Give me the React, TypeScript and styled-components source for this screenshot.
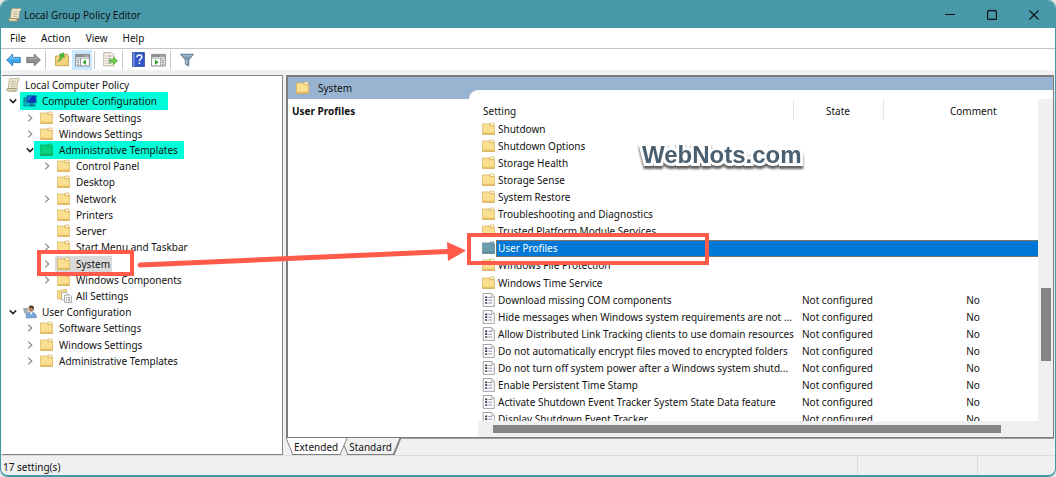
import React from "react";
import styled, { createGlobalStyle, css } from "styled-components";

const Global = createGlobalStyle`
  * { box-sizing: border-box; }
  html, body, #root { height: 100%; }
  body {
    margin: 0;
    background: #e4e6e8;
    color: #111;
    font: 10px/16px "Noto Sans", "Open Sans", sans-serif;
  }
  button { font: inherit; color: inherit; border: 0; padding: 0; background: none; }
  svg { display: block; flex: none; }
`;

const teal = "#4799aa";
const face = "#f0f0f0";
const red = "#ff5a4a";
const focus = "#7d7468";

const Window = styled.div`
  position: relative;
  display: flex;
  flex-direction: column;
  height: 100vh;
  min-height: 400px;
  overflow: hidden;
  background: ${face};
  border: 1px solid ${teal};
  border-bottom-width: 2px;
  border-radius: 8px;
`;
const TitleBar = styled.header`
  display: flex;
  align-items: center;
  height: 27px;
  flex: none;
  padding-left: 7px;
  background: ${teal};
`;
const Title = styled.h1`
  flex: 1;
  margin: 0;
  padding-left: 2px;
  font-size: 10px;
  font-weight: 400;
`;
const CaptionButton = styled.button`
  display: grid;
  place-items: center;
  width: 42px;
  height: 27px;
`;
const MenuBar = styled.nav`
  display: flex;
  gap: 15px;
  height: 21px;
  flex: none;
  align-items: center;
  padding-left: 9px;
  background: #fff;
  border-bottom: 1px solid #c3c5c9;
`;
const ToolBar = styled.div`
  display: flex;
  align-items: center;
  height: 21px;
  flex: none;
  padding-left: 2px;
  background: #fff;
`;
const ToolButton = styled.button<{ $on?: boolean }>`
  display: grid;
  place-items: center;
  width: 20px;
  height: 20px;
  ${(p) => p.$on && css`background: #cce8ff;`}
`;
const Divider = styled.span<{ $after?: number }>`
  width: 1px;
  height: 18px;
  margin: 0 ${(p) => p.$after ?? 5}px 0 2px;
  background: #c8c8c8;
`;
const Main = styled.main`
  display: flex;
  flex: 1;
  min-height: 0;
  gap: 3px;
  padding: 5px 1px 0 1px;
`;
const TreePane = styled.section`
  width: 281px;
  flex: none;
  overflow: hidden;
  background: #fff;
  border: 1px solid #828790;
  border-left: 0;
  padding-top: 1px;
`;
const Tree = styled.ul`
  display: grid;
  grid-auto-rows: 1fr;
  height: 292px;
  margin: 0;
  padding: 0;
  list-style: none;
`;
const TreeItem = styled.li<{ $depth: number }>`
  display: flex;
  align-items: center;
  padding-left: ${(p) => p.$depth * 17}px;
`;
const Toggle = styled.span`
  display: grid;
  place-items: center;
  width: 18px;
  margin-left: 2px;
`;
const TreeLabel = styled.span<{ $mark?: [number, number]; $selected?: boolean; $root?: boolean }>`
  display: flex;
  align-items: center;
  gap: 5px;
  height: 16px;
  padding: 0 2px 0 1px;
  white-space: nowrap;
  ${(p) => p.$root && css`margin-left: -17px;`}
  ${(p) =>
    p.$mark &&
    css`
      height: 18px;
      margin: -1px 0 -1px ${1 - p.$mark[0]}px;
      padding: 0 ${p.$mark[1]}px 0 ${p.$mark[0]}px;
      background: #00ffd9;
    `}
  ${(p) => p.$selected && css`margin-left: -1px; padding-left: 2px; background: #d9d9d9;`}
`;
const IconBox = styled.span`
  width: 14px;
`;
const RightColumn = styled.div`
  display: flex;
  flex-direction: column;
  flex: 1;
  min-width: 0;
`;
const ResultPane = styled.section`
  display: grid;
  grid-template-columns: 181px 1fr;
  grid-template-rows: 13px 9px 1fr;
  flex: 1;
  min-height: 0;
  background: #fff;
  border: 2px solid #7c7c7c;
  border-right-width: 1px;
  border-bottom-width: 1px;
`;
const PaneHeader = styled.div`
  grid-area: 1 / 1 / 3 / 3;
  display: flex;
  align-items: center;
  gap: 9px;
  padding-left: 8px;
  background: #99b4d1;
`;
const Description = styled.div`
  grid-area: 3 / 1;
  padding: 4px;
  font-weight: 700;
`;
const ListArea = styled.div`
  grid-area: 2 / 2 / 4 / 3;
  display: grid;
  grid-template-columns: minmax(0, 1fr) 15px;
  grid-template-rows: minmax(0, 1fr) 16px;
  min-height: 0;
  padding: 9px 0 0 9px;
  background: #fff;
  border-top-left-radius: 9px;
`;
const ListView = styled.div`
  overflow: hidden;
`;
const VerticalBar = styled.div`
  display: flex;
  flex-direction: column;
  padding: 0 2px 0 3px;
  background: ${face};
  &::before { content: ""; flex: 189; }
  &::after { content: ""; flex: 60; }
`;
const HorizontalBar = styled.div`
  grid-column: 1 / 3;
  display: flex;
  padding: 4px 0;
  background: ${face};
  &::before { content: ""; flex: 15; }
  &::after { content: ""; flex: 52; }
`;
const Thumb = styled.span<{ $share: number }>`
  flex: ${(p) => p.$share};
  background: #858585;
`;
const Table = styled.table`
  width: calc(100% + 25px);
  height: 329px;
  table-layout: fixed;
  border-collapse: collapse;
`;
const HeadCell = styled.th<{ $left?: boolean }>`
  height: 21px;
  padding: 2px 5px 0;
  font-weight: 400;
  text-align: ${(p) => (p.$left ? "left" : "center")};
  border-right: 1px solid #e5e5e5;
  &:last-child { border-right: 0; }
`;
const Row = styled.tr`
  height: 17px;
`;
const Cell = styled.td<{ $center?: boolean; $selected?: boolean }>`
  padding: 0 0 0 ${(p) => (p.$center ? 0 : 9)}px;
  line-height: 16px;
  white-space: nowrap;
  text-align: ${(p) => (p.$center ? "center" : "left")};
  ${(p) =>
    p.$selected &&
    css`background: #0078d7; box-shadow: inset 0 1px ${focus}, inset 0 -1px ${focus};`}
`;
const NameCell = styled(Cell)`
  padding: 0 0 0 4px;
`;
const Name = styled.div`
  display: flex;
  align-items: center;
  gap: 1px;
  height: 17px;
`;
const NameText = styled.span<{ $selected?: boolean }>`
  flex: 1;
  min-width: 0;
  padding: 0 2px;
  ${(p) =>
    p.$selected &&
    css`
      color: #fff;
      background: #0078d7;
      line-height: 17px;
      box-shadow: inset 1px 1px ${focus}, inset 0 -1px ${focus};
    `}
`;
const Tabs = styled.div`
  display: flex;
  height: 17px;
  flex: none;
  border-top: 1px solid #a0a0a0;
`;
const Tab = styled.button<{ $active?: boolean }>`
  position: relative;
  z-index: ${(p) => (p.$active ? 1 : 0)};
  isolation: isolate;
  height: 16px;
  padding: 0 9px 0 8px;
  margin-right: -6px;
  &::before, &::after {
    content: "";
    position: absolute;
    z-index: -1;
    top: -1px;
    bottom: 0;
    background: ${(p) => (p.$active ? "#fff" : face)};
    border: 0 solid #808080;
    border-bottom-width: 1px;
  }
  &::before { left: 3px; right: 40%; border-left-width: 1px; transform: skewX(22deg); }
  &::after { left: 40%; right: 3px; border-right-width: ${(p) => (p.$active ? 1 : 2)}px; transform: skewX(-22deg); }
`;
const StatusBar = styled.footer`
  display: flex;
  height: 20px;
  flex: none;
  padding-left: 2px;
  line-height: 22px;
  border-top: 1px solid #dcdcdc;
`;
const StatusText = styled.span`
  flex: 1;
`;
const StatusCell = styled.span<{ $width: number }>`
  width: ${(p) => p.$width}px;
  border-left: 1px solid #d9d9d9;
`;
const Callout = styled.div<{ $x: number; $y: number; $w: number; $h: number }>`
  position: absolute;
  left: ${(p) => p.$x}px;
  top: ${(p) => p.$y}px;
  width: ${(p) => p.$w}px;
  height: ${(p) => p.$h}px;
  border: 4px solid ${red};
`;
const ArrowLayer = styled.svg`
  position: absolute;
  left: 129px;
  top: 229px;
`;
const Watermark = styled.div`
  position: absolute;
  left: 641px;
  top: 140px;
  font: 700 24px/28px "Liberation Sans", Arial, sans-serif;
  color: #4a6070;
  -webkit-text-stroke: 6px #fff;
  paint-order: stroke fill;
  filter: drop-shadow(0 3px 1px #606060);
`;

const Folder = ({ tone = "plain" }: { tone?: "plain" | "green" | "blue" }) => {
  const c = {
    plain: ["#fadf90", "#f0ca6c", "#d0a850", "#fff"],
    green: ["#05d27c", "#04c070", "#079a5c", "#12df90"],
    blue: ["#6a9eaa", "#5f929e", "#4b7f8d", "#86b4be"],
  }[tone];
  return (
    <svg width="13" height="14" viewBox="0 0 13 14" aria-hidden="true">
      <path d="M7 3L8.2 1H12V12H7z" fill={c[1]} stroke={c[2]} strokeWidth=".6" />
      <path d="M8.8 1.5h2.6v1.6H8.8z" fill={c[3]} />
      <path d="M.5 1.9H6.8L8 3.6H12.6V12.2H.5z" fill={c[0]} stroke={c[2]} strokeWidth=".6" />
      <path d="M.8 10.6H12.4V12H.8z" fill={c[1]} />
      <path d="M.3 12.2H12.8" stroke={c[2]} strokeWidth=".9" />
    </svg>
  );
};

const Scroll = () => (
  <svg width="14" height="14" viewBox="0 0 14 14" aria-hidden="true">
    <path d="M3.5 1.2C4 .6 5 .6 5.5.6H12.5C13.6.8 13.6 2.6 12.3 2.8H11.6L10.8 10.5H2.2z" fill="#f3ecd2" stroke="#a39878" strokeWidth=".7" />
    <path d="M1.2 10.5H9.2C8.6 11.5 9 13 10 13.3H2C.4 13 .4 11 1.2 10.5z" fill="#e2d7b0" stroke="#8e8466" strokeWidth=".7" />
    <path d="M10 13.3C11.4 13 11.2 11.2 10.8 10.4" fill="none" stroke="#8e8466" strokeWidth=".8" />
    <path d="M5 3.2h5M4.8 5h5M4.6 6.8h5M4.4 8.6h5" stroke="#b0a88c" strokeWidth=".7" />
  </svg>
);

const Computer = () => (
  <svg width="14" height="14" viewBox="0 0 14 14" aria-hidden="true">
    <path d="M.8 3.5H4V12H.8z" fill="#0bb0c0" stroke="#087a92" strokeWidth=".7" />
    <path d="M4 1.5H13.2V9H4z" fill="#0a35b8" stroke="#0a8fae" strokeWidth=".9" />
    <path d="M4.8 2.2H9L5 7.8z" fill="#1f78e0" />
    <path d="M7 9H10.4V11H7zM5 10.6H12.6V12.4H5z" fill="#08809c" />
    <path d="M1.4 5.2H3.4M1.4 7H3.4" stroke="#066" strokeWidth=".7" />
  </svg>
);

const User = () => (
  <svg width="14" height="14" viewBox="0 0 14 14" aria-hidden="true">
    <path d="M3.2 13C3 8.8 5.2 7 8 7S13.4 9 13.4 12.6z" fill="#7ba9dd" stroke="#4a76ad" strokeWidth=".6" />
    <circle cx="8" cy="4" r="2.7" fill="#b98560" />
    <path d="M5.6 2.8C5.8.8 7.5.2 8.8.6 11 .9 11.2 3.2 10.6 5 9.8 3 7.8 2 5.6 2.8z" fill="#4e3626" />
    <path d="M.6 3.4H4.4V7.2L3 9.4 1.4 7.2z" fill="#a9b6c0" stroke="#71808c" strokeWidth=".6" />
    <path d="M6.8 7.2L8.2 9.8 9.6 7.2z" fill="#fff" />
  </svg>
);

const AllSettings = () => (
  <svg width="15" height="14" viewBox="0 0 15 14" aria-hidden="true">
    <path d="M.4 1.4H4.6L5.8.4H9.4V10H.4z" fill="#f7d983" stroke="#cda74c" strokeWidth=".6" />
    <path d="M4.6 3.4H9.4L10.8 4.8V11H4.6z" fill="#fff" stroke="#909090" strokeWidth=".7" />
    <path d="M7.6 6H12.6L14.4 7.6V13.6H7.6z" fill="#fff" stroke="#858585" strokeWidth=".7" />
    <path d="M9 8.6h1M11 8.6h2M9 10.2h1M11 10.2h2M9 11.8h1M11 11.8h2" stroke="#777" strokeWidth=".8" />
  </svg>
);

const SettingPage = () => (
  <svg width="13" height="14" viewBox="0 0 13 14" aria-hidden="true">
    <path d="M1.2.5H9.6L12.3 3.2V13.4H1.2z" fill="#fff" stroke="#8d8d8d" strokeWidth=".8" />
    <path d="M9.4.8V3.4H12" fill="none" stroke="#a8a8a8" strokeWidth=".7" />
    <path d="M3.2 4.4h2M3.2 7.2h2M3.2 10h2" stroke="#2b2b45" strokeWidth="1.7" />
    <path d="M6.4 4.4h3.8M6.4 7.2h3.8M6.4 10h3.8" stroke="#8c8cae" strokeWidth="1" />
  </svg>
);

const Chevron = ({ open }: { open?: boolean }) => (
  <svg width="8" height="8" viewBox="0 0 8 8" fill="none" aria-hidden="true">
    {open ? (
      <path d="M.8 2.4L4 5.6 7.2 2.4" stroke="#222" strokeWidth="1.5" />
    ) : (
      <path d="M2.2.6L5.8 4 2.2 7.4" stroke="#8a8a8a" strokeWidth="1.2" />
    )}
  </svg>
);

const BlueArrow = () => (
  <svg width="15" height="14" viewBox="0 0 15 14" aria-hidden="true">
    <path d="M.7 7L6.6 1.2V4.4H14.2V9.6H6.6V12.8z" fill="#3ba7ea" stroke="#2173b4" strokeWidth=".9" />
    <path d="M2.6 6.6L6 3.4V5.6H13" fill="none" stroke="#8fd2f8" strokeWidth=".9" />
  </svg>
);
const GreyArrow = () => (
  <svg width="15" height="14" viewBox="0 0 15 14" aria-hidden="true">
    <path d="M14.3 7L8.4 1.2V4.4H.8V9.6H8.4V12.8z" fill="#909090" stroke="#686868" strokeWidth=".9" />
    <path d="M1.8 5.6H9V3.6L12.4 6.8" fill="none" stroke="#b8b8b8" strokeWidth=".8" />
  </svg>
);
const UpFolder = () => (
  <svg width="14" height="15" viewBox="0 0 14 15" aria-hidden="true">
    <path d="M.6 4H6L7.4 2.2H12.4V4H13.4V13.6H.6z" fill="#f3d27b" stroke="#bd9640" strokeWidth=".8" />
    <path d="M2.8 9.4C5.6 8.6 7 7 7.4 4.8L9.4 5.4 8.6.8 4 2.8 5.6 3.8C5.4 6.2 4.4 7.8 2.8 9.4z" fill="#4dba35" stroke="#2c8a1c" strokeWidth=".5" />
  </svg>
);
const Panel = ({ divided }: { divided?: boolean }) => (
  <svg width="15" height="14" viewBox="0 0 15 14" aria-hidden="true">
    <path d="M.6 1.4H14.4V13H.6z" fill="#fff" stroke="#808080" strokeWidth=".9" />
    <path d="M1 1.8H14V4.2H1z" fill="#8a8f96" />
    <path d="M9.8 3h1M11.8 3h1" stroke="#fff" strokeWidth=".9" />
    <path d="M1 5.2H14" stroke="#a0a6ac" strokeWidth=".8" />
    {divided ? (
      <>
        <path d="M5.4 5.2V13" stroke="#808080" strokeWidth=".9" />
        <path d="M1.8 7.2h2.4M1.8 9.2h2.4M1.8 11.2h2.4" stroke="#707a86" strokeWidth="1" />
        <path d="M11 6.4L7.4 9.2 11 12z" fill="#3da02c" />
      </>
    ) : (
      <>
        <path d="M9.8 5.2V13" stroke="#808080" strokeWidth=".9" />
        <path d="M11 7.2h2.2M11 9.2h2.2M11 11.2h2.2" stroke="#707a86" strokeWidth="1" />
        <path d="M4 6.4L7.6 9.2 4 12z" fill="#3da02c" />
      </>
    )}
  </svg>
);
const ExportIcon = () => (
  <svg width="15" height="15" viewBox="0 0 15 15" aria-hidden="true">
    <path d="M.8.8H8.4L10.8 3.2V13.8H.8z" fill="#fdf9ea" stroke="#a39a7d" strokeWidth=".8" />
    <path d="M2.6 4h1M4.6 4h4M2.6 6.4h1M4.6 6.4h3M2.6 8.8h1M4.6 8.8h2M2.6 11.2h1M4.6 11.2h4" stroke="#7b7b8a" strokeWidth=".8" />
    <path d="M6.6 7.4H10.4V5L14.6 8.8 10.4 12.4V10.2H6.6z" fill="#6fd04a" stroke="#3a9624" strokeWidth=".6" />
  </svg>
);
const HelpIcon = () => (
  <svg width="13" height="15" viewBox="0 0 13 15" aria-hidden="true">
    <path d="M.6.6H12.4V14.4H.6z" fill="#3558c8" stroke="#1c3a94" strokeWidth=".8" />
    <path d="M1 .8H2.6V14.2H1z" fill="#7594e4" />
    <path d="M5 5.2C5 2.4 9.8 2.4 9.8 5.2 9.8 7 7.4 7 7.4 9.2" fill="none" stroke="#fff" strokeWidth="1.5" />
    <path d="M6.6 10.4h1.6v1.6H6.6z" fill="#fff" />
  </svg>
);
const Funnel = () => (
  <svg width="14" height="14" viewBox="0 0 14 14" aria-hidden="true">
    <path d="M.4 1.2H13.6L8.8 7V13L5.4 11.4V7z" fill="#7c98ad" stroke="#56748a" strokeWidth=".8" />
    <path d="M2.4 2.2H11.6L10.4 3.6H3.6z" fill="#a9becd" />
    <path d="M6.6 7V11.4" stroke="#c3d3de" strokeWidth="1" />
  </svg>
);

type Node = {
  label: string;
  depth: number;
  state?: "open" | "closed";
  icon?: React.ReactNode;
  mark?: [number, number];
  selected?: boolean;
};
const nodes: Node[] = [
  { label: "Local Computer Policy", depth: 0, icon: <Scroll /> },
  { label: "Computer Configuration", depth: 0, state: "open", icon: <Computer />, mark: [3, 11] },
  { label: "Software Settings", depth: 1, state: "closed" },
  { label: "Windows Settings", depth: 1, state: "closed" },
  { label: "Administrative Templates", depth: 1, state: "open", icon: <Folder tone="green" />, mark: [6, 6] },
  { label: "Control Panel", depth: 2, state: "closed" },
  { label: "Desktop", depth: 2 },
  { label: "Network", depth: 2, state: "closed" },
  { label: "Printers", depth: 2 },
  { label: "Server", depth: 2 },
  { label: "Start Menu and Taskbar", depth: 2, state: "closed" },
  { label: "System", depth: 2, state: "closed", selected: true },
  { label: "Windows Components", depth: 2, state: "closed" },
  { label: "All Settings", depth: 2, icon: <AllSettings /> },
  { label: "User Configuration", depth: 0, state: "open", icon: <User /> },
  { label: "Software Settings", depth: 1, state: "closed" },
  { label: "Windows Settings", depth: 1, state: "closed" },
  { label: "Administrative Templates", depth: 1, state: "closed" },
];

const folders = [
  "Shutdown",
  "Shutdown Options",
  "Storage Health",
  "Storage Sense",
  "System Restore",
  "Troubleshooting and Diagnostics",
  "Trusted Platform Module Services",
  "User Profiles",
  "Windows File Protection",
  "Windows Time Service",
];
const settings = [
  "Download missing COM components",
  "Hide messages when Windows system requirements are not ...",
  "Allow Distributed Link Tracking clients to use domain resources",
  "Do not automatically encrypt files moved to encrypted folders",
  "Do not turn off system power after a Windows system shutd...",
  "Enable Persistent Time Stamp",
  "Activate Shutdown Event Tracker System State Data feature",
  "Display Shutdown Event Tracker",
];

export default function App() {
  return (
    <>
      <Global />
      <Window>
        <TitleBar>
          <Scroll />
          <Title>Local Group Policy Editor</Title>
          <CaptionButton aria-label="Minimize">
            <svg width="10" height="10" viewBox="0 0 10 10"><path d="M0 4.5h10" stroke="#111" /></svg>
          </CaptionButton>
          <CaptionButton aria-label="Maximize">
            <svg width="10" height="10" viewBox="0 0 10 10"><rect x=".6" y=".6" width="8.8" height="8.8" rx="1" fill="none" stroke="#111" strokeWidth="1.2" /></svg>
          </CaptionButton>
          <CaptionButton aria-label="Close">
            <svg width="10" height="10" viewBox="0 0 10 10"><path d="M.5.5l9 9M9.5.5l-9 9" stroke="#111" strokeWidth="1.1" /></svg>
          </CaptionButton>
        </TitleBar>
        <MenuBar>
          <button>File</button>
          <button>Action</button>
          <button>View</button>
          <button>Help</button>
        </MenuBar>
        <ToolBar>
          <ToolButton aria-label="Back"><BlueArrow /></ToolButton>
          <ToolButton aria-label="Forward"><GreyArrow /></ToolButton>
          <Divider $after={6} />
          <ToolButton aria-label="Up one level"><UpFolder /></ToolButton>
          <ToolButton aria-label="Show console tree" $on><Panel divided /></ToolButton>
          <Divider />
          <ToolButton aria-label="Export list"><ExportIcon /></ToolButton>
          <Divider />
          <ToolButton aria-label="Help topics"><HelpIcon /></ToolButton>
          <ToolButton aria-label="Show action pane"><Panel /></ToolButton>
          <Divider $after={6} />
          <ToolButton aria-label="Filter"><Funnel /></ToolButton>
        </ToolBar>
        <Main>
          <TreePane>
            <Tree role="tree">
              {nodes.map((n, i) => (
                <TreeItem key={i} $depth={n.depth} role="treeitem" aria-level={n.depth + 1}>
                  <Toggle>{n.state && <Chevron open={n.state === "open"} />}</Toggle>
                  <TreeLabel $mark={n.mark} $selected={n.selected} $root={i === 0}>
                    <IconBox>{n.icon ?? <Folder />}</IconBox>
                    {n.label}
                  </TreeLabel>
                </TreeItem>
              ))}
            </Tree>
          </TreePane>
          <RightColumn>
            <ResultPane>
              <PaneHeader>
                <Folder />
                System
              </PaneHeader>
              <Description>User Profiles</Description>
              <ListArea>
                <ListView>
                  <Table>
                    <colgroup>
                      <col />
                      <col width="90" />
                      <col width="180" />
                    </colgroup>
                    <thead>
                      <tr>
                        <HeadCell $left>Setting</HeadCell>
                        <HeadCell>State</HeadCell>
                        <HeadCell>Comment</HeadCell>
                      </tr>
                    </thead>
                    <tbody>
                      {folders.map((f) => {
                        const selected = f === "User Profiles";
                        return (
                          <Row key={f}>
                            <NameCell>
                              <Name>
                                <Folder tone={selected ? "blue" : "plain"} />
                                <NameText $selected={selected}>{f}</NameText>
                              </Name>
                            </NameCell>
                            <Cell $selected={selected} />
                            <Cell $selected={selected} />
                          </Row>
                        );
                      })}
                      {settings.map((s) => (
                        <Row key={s}>
                          <NameCell>
                            <Name>
                              <SettingPage />
                              <NameText>{s}</NameText>
                            </Name>
                          </NameCell>
                          <Cell>Not configured</Cell>
                          <Cell $center>No</Cell>
                        </Row>
                      ))}
                    </tbody>
                  </Table>
                </ListView>
                <VerticalBar><Thumb $share={73} /></VerticalBar>
                <HorizontalBar><Thumb $share={507} /></HorizontalBar>
              </ListArea>
            </ResultPane>
            <Tabs>
              <Tab $active>Extended</Tab>
              <Tab>Standard</Tab>
            </Tabs>
          </RightColumn>
        </Main>
        <StatusBar>
          <StatusText>17 setting(s)</StatusText>
          <StatusCell $width={120} />
          <StatusCell $width={78} />
        </StatusBar>
        <Callout $x={36} $y={249} $w={97} $h={26} />
        <Callout $x={466} $y={232} $w={242} $h={32} />
        <ArrowLayer width="340" height="45" viewBox="0 0 340 45" aria-hidden="true">
          <path d="M10 35L318 21.5" stroke={red} strokeWidth="5" strokeLinecap="round" />
          <path d="M317 12L336 20.5 318 31z" fill={red} />
        </ArrowLayer>
        <Watermark>WebNots.com</Watermark>
      </Window>
    </>
  );
}
